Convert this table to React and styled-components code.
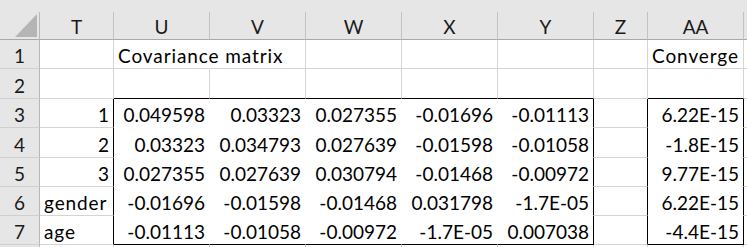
import React from 'react'
import styled, { createGlobalStyle } from 'styled-components'

const Global = createGlobalStyle`
  html, body { margin: 0; padding: 0; background: #fff; }
  body { font-family: Lato, "Open Sans", sans-serif; }
`

const Sheet = styled.div`
  width: 747px;
  height: 247px;
  overflow: hidden;
  background: #fff;
`

const TopStrip = styled.div`
  height: 12px;
  background: #e6e6e6;
`

const Grid = styled.div`
  display: grid;
  grid-template-columns: 40px 74px repeat(5, 96px) 54px 96px 1fr;
  grid-template-rows: 28px 29px 30px 29px 30px 29px 29px 29px 30px;
  font-size: 19px;
  color: #000;
`

const Corner = styled.div`
  background: #e6e6e6;
  border-right: 1px solid #b8b8b8;
  border-bottom: 1px solid #a9a9a9;
  display: flex;
  justify-content: flex-end;
  align-items: flex-end;
  padding: 0 2px 2px 0;
  box-sizing: border-box;
`

const ColHead = styled.div`
  background: #e6e6e6;
  border-right: 1px solid #c2c2c2;
  border-bottom: 1px solid #a9a9a9;
  display: flex;
  justify-content: center;
  align-items: center;
  padding-top: 1px;
  box-sizing: border-box;
  color: #1a1a1a;
`

const RowHead = styled.div`
  background: #e6e6e6;
  border-right: 1px solid #b8b8b8;
  border-bottom: 1px solid #cfcfcf;
  display: flex;
  justify-content: center;
  align-items: flex-end;
  line-height: 22px;
  padding-bottom: 1px;
  box-sizing: border-box;
  color: #1a1a1a;
`

const lineColor = { grid: '#d4d4d4', none: 'transparent', box: '#000' }

const Cell = styled.div`
  border-right: 1px solid ${p => lineColor[p.$r]};
  border-bottom: 1px solid ${p => lineColor[p.$b]};
  display: flex;
  align-items: flex-end;
  justify-content: ${p => (p.$numeric ? 'flex-end' : 'flex-start')};
  padding: 0 4px 1px 4px;
  line-height: 22px;
  letter-spacing: ${p => (p.$numeric ? '0' : '0.9px')};
  white-space: nowrap;
  box-sizing: border-box;
  min-width: 0;
`

const columns = ['T', 'U', 'V', 'W', 'X', 'Y', 'Z', 'AA', '']

const rows = [
  ['', 'Covariance matrix', '', '', '', '', '', 'Converge', ''],
  ['', '', '', '', '', '', '', '', ''],
  ['1', '0.049598', '0.03323', '0.027355', '-0.01696', '-0.01113', '', '6.22E-15', ''],
  ['2', '0.03323', '0.034793', '0.027639', '-0.01598', '-0.01058', '', '-1.8E-15', ''],
  ['3', '0.027355', '0.027639', '0.030794', '-0.01468', '-0.00972', '', '9.77E-15', ''],
  ['gender', '-0.01696', '-0.01598', '-0.01468', '0.031798', '-1.7E-05', '', '6.22E-15', ''],
  ['age', '-0.01113', '-0.01058', '-0.00972', '-1.7E-05', '0.007038', '', '-4.4E-15', ''],
  ['', '', '', '', '', '', '', '', ''],
]

const inBox = c => (c >= 1 && c <= 5) || c === 7

const rightLine = (r, c) => {
  const boxRow = r >= 3 && r <= 7
  if (r === 1 && c === 1) return 'none'
  if (boxRow) {
    if (c === 0 || c === 5 || c === 6 || c === 7) return 'box'
    if (c >= 1 && c <= 4) return 'none'
  }
  return 'grid'
}

const bottomLine = (r, c) => {
  if (!inBox(c)) return 'grid'
  if (r === 2 || r === 7) return 'box'
  if (r >= 3 && r <= 6) return 'none'
  return 'grid'
}

const isNumber = v => /^-?[\d.]+(E-?\d+)?$/.test(v)

const App = () => {
  return (
    <Sheet>
      <Global />
      <TopStrip />
      <Grid>
        <Corner>
          <svg width="22" height="23" viewBox="0 0 22 23">
            <polygon points="0,23 22,23 22,0" fill="#b5b5b5" />
          </svg>
        </Corner>
        {columns.map((c, i) => (
          <ColHead key={i}>{c}</ColHead>
        ))}
        {rows.map((row, ri) => {
          const r = ri + 1
          return (
            <React.Fragment key={r}>
              <RowHead>{r <= 7 ? r : ''}</RowHead>
              {row.map((v, c) => (
                <Cell
                  key={c}
                  $r={rightLine(r, c)}
                  $b={bottomLine(r, c)}
                  $numeric={isNumber(v)}
                >
                  {v}
                </Cell>
              ))}
            </React.Fragment>
          )
        })}
      </Grid>
    </Sheet>
  )
}

export default App
